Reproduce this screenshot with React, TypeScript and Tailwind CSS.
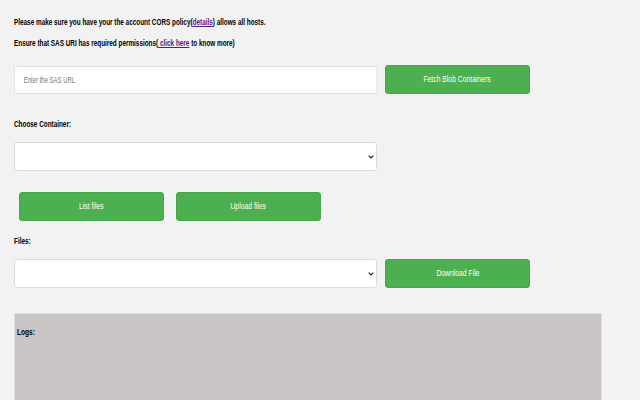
import React from 'react'

const font = { fontFamily: '"Liberation Sans", Arial, sans-serif' }

function Chevron() {
  return (
    <svg width="6" height="4" viewBox="0 0 6 4" className="absolute right-[3px] top-1/2 -translate-y-1/2 pointer-events-none">
      <path d="M0.7 0.7 L3 3 L5.3 0.7" fill="none" stroke="#222" strokeWidth="1.2" />
    </svg>
  )
}

function Select() {
  return (
    <div className="relative w-[363px] h-[29px]">
      <select className="w-full h-full appearance-none bg-white border border-[#dcdcdc] rounded-[3px] outline-none" />
      <Chevron />
    </div>
  )
}

function GreenButton({ label, className = '' }: { label: string; className?: string }) {
  return (
    <button
      className={`w-[145px] h-[29px] bg-[#4caf50] text-white text-[8.5px] rounded-[3px] border border-[#46a74a] ${className}`}
    >
      <span className="inline-block scale-x-[0.8]">{label}</span>
    </button>
  )
}

export default function App() {
  return (
    <div className="h-screen bg-[#f2f2f2] px-[14px] pt-[16px] text-black overflow-hidden" style={font}>
      <p className="w-[800px] origin-left scale-x-[0.75] text-[8.5px] font-bold leading-[12px]">
        Please make sure you have your the account CORS policy(
        <a href="#" className="text-[#551a8b] underline">details</a>) allows all hosts.
      </p>
      <p className="w-[800px] origin-left scale-x-[0.75] mt-[9px] text-[8.5px] font-bold leading-[12px]">
        Ensure that SAS URI has required permissions(
        <a href="#" className="text-[#551a8b] underline"> click here</a> to know more)
      </p>

      <div className="mt-[16px] flex items-center gap-[8px]">
        <div className="w-[363px] h-[28px]">
          <input
            placeholder="Enter the SAS URL"
            className="w-[519px] h-[28px] origin-left scale-x-[0.7] bg-white border border-[#dcdcdc] rounded-[3px] px-[13px] text-[8.5px] placeholder:text-[#757575] outline-none"
          />
        </div>
        <GreenButton label="Fetch Blob Containers" />
      </div>

      <p className="w-[800px] origin-left scale-x-[0.75] mt-[24px] text-[8.5px] font-bold leading-[12px]">Choose Container:</p>
      <div className="mt-[12px]">
        <Select />
      </div>

      <div className="mt-[21px] ml-[5px] flex gap-[12px]">
        <GreenButton label="List files" />
        <GreenButton label="Upload files" />
      </div>

      <p className="w-[800px] origin-left scale-x-[0.75] mt-[14px] text-[8.5px] font-bold leading-[12px]">Files:</p>
      <div className="mt-[12px] flex items-center gap-[8px]">
        <Select />
        <GreenButton label="Download File" />
      </div>

      <div className="mt-[25px] w-[588px] h-[120px] bg-[#c9c5c4] border border-[#e0dede] pt-[12px] px-[2px]">
        <p className="w-[800px] origin-left scale-x-[0.77] text-[8.5px] font-bold leading-[12px]">Logs:</p>
      </div>
    </div>
  )
}
